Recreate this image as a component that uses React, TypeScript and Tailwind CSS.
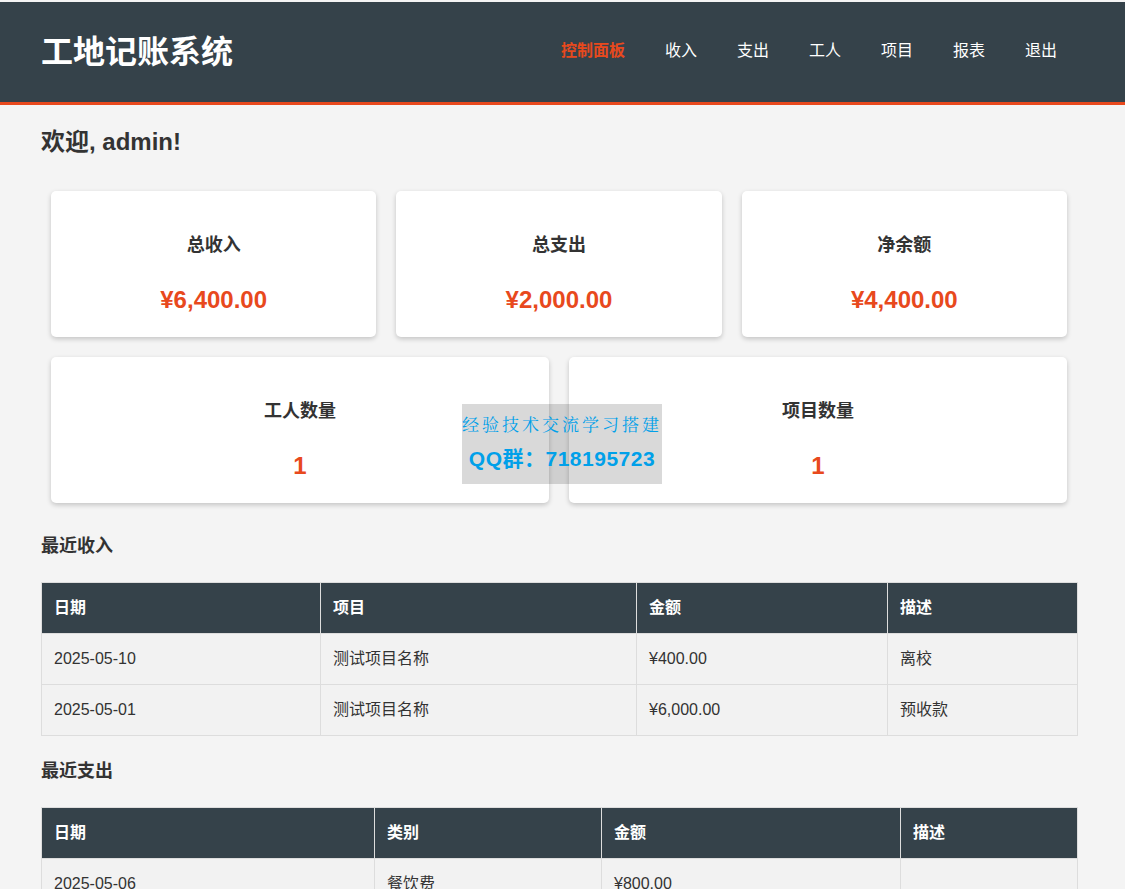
const nav = ["控制面板", "收入", "支出", "工人", "项目", "报表", "退出"];

function Card({ title, value }: { title: string; value: string }) {
  return (
    <div className="flex-1 h-[146px] bg-white rounded-[5px] shadow-[0_2px_5px_rgba(0,0,0,0.2)] flex flex-col items-center pt-[42px]">
      <h3 className="text-[18px] leading-[24px] font-bold text-[#333]">{title}</h3>
      <p className="mt-[29px] text-[24px] leading-[28px] font-bold text-[#e8491d]">{value}</p>
    </div>
  );
}

function DataTable({ heads, widths, rows }: { heads: string[]; widths: number[]; rows: string[][] }) {
  return (
    <table className="w-[1036px] table-fixed border-collapse text-[16px]">
      <colgroup>
        {widths.map((w, i) => (
          <col key={i} style={{ width: w }} />
        ))}
      </colgroup>
      <thead>
        <tr className="h-[51px] bg-[#35424a] text-white">
          {heads.map((h) => (
            <th key={h} className="border border-[#ddd] px-3 text-left font-bold">{h}</th>
          ))}
        </tr>
      </thead>
      <tbody>
        {rows.map((r, i) => (
          <tr key={i} className="h-[51px] bg-[#f2f2f2]">
            {r.map((c, j) => (
              <td key={j} className="border border-[#ddd] px-3 text-[#333]">{c}</td>
            ))}
          </tr>
        ))}
      </tbody>
    </table>
  );
}

export default function App() {
  return (
    <div className="relative h-[889px] overflow-hidden bg-[#f4f4f4] text-[#333] font-['Liberation_Sans','Noto_Sans_CJK_SC',sans-serif]">
      <header className="mt-px h-[103px] relative top-px bg-[#35424a] border-b-[3px] border-[#e8491d] flex items-center justify-between pl-[41px] pr-[68px]">
        <h1 className="text-[32px] font-bold text-white leading-none">工地记账系统</h1>
        <nav className="flex gap-[40px] pb-[2px]">
          {nav.map((n, i) => (
            <a key={n} className={i === 0 ? "text-[16px] font-bold text-[#e8491d]" : "text-[16px] text-white"}>{n}</a>
          ))}
        </nav>
      </header>
      <main className="pl-[41px] w-[1077px]">
        <h2 className="mt-[24px] text-[24px] leading-[28px] font-bold">欢迎, admin!</h2>
        <div className="mt-[35px] px-[10px] flex flex-col gap-[20px]">
          <div className="flex gap-[20px]">
            <Card title="总收入" value="¥6,400.00" />
            <Card title="总支出" value="¥2,000.00" />
            <Card title="净余额" value="¥4,400.00" />
          </div>
          <div className="flex gap-[20px]">
            <Card title="工人数量" value="1" />
            <Card title="项目数量" value="1" />
          </div>
        </div>
        <h3 className="mt-[32px] mb-[25px] text-[18px] leading-[22px] font-bold">最近收入</h3>
        <DataTable
          heads={["日期", "项目", "金额", "描述"]}
          widths={[279, 316, 251, 190]}
          rows={[
            ["2025-05-10", "测试项目名称", "¥400.00", "离校"],
            ["2025-05-01", "测试项目名称", "¥6,000.00", "预收款"],
          ]}
        />
        <h3 className="mt-[24px] mb-[25px] text-[18px] leading-[22px] font-bold">最近支出</h3>
        <DataTable
          heads={["日期", "类别", "金额", "描述"]}
          widths={[333, 227, 299, 177]}
          rows={[["2025-05-06", "餐饮费", "¥800.00", ""]]}
        />
      </main>
      <div className="absolute left-[462px] top-[404px] w-[200px] h-[80px] bg-[rgba(0,0,0,0.15)] flex flex-col items-center text-[#00a0e9] font-bold">
        <div className="mt-[11px] text-[17px] leading-[22px] whitespace-nowrap font-['Liberation_Serif','Noto_Serif_CJK_SC','Noto_Sans_CJK_SC',serif] tracking-[3px] font-normal">经验技术交流学习搭建</div>
        <div className="mt-[9px] text-[21px] leading-[26px] whitespace-nowrap tracking-[0.5px]">QQ群：718195723</div>
      </div>
    </div>
  );
}
